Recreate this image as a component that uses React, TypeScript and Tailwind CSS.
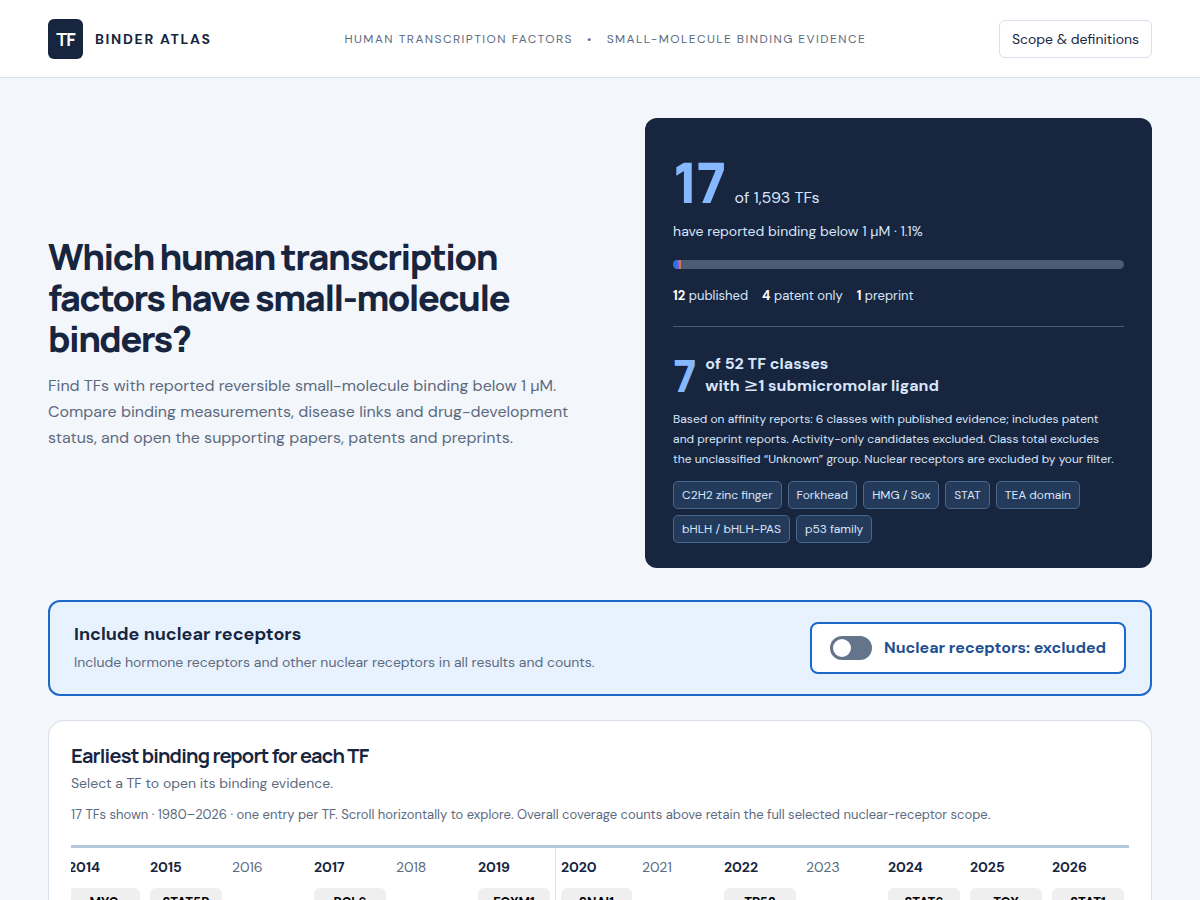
import { useState } from "react";

const tfClasses = [
  "C2H2 zinc finger",
  "Forkhead",
  "HMG / Sox",
  "STAT",
  "TEA domain",
  "bHLH / bHLH-PAS",
  "p53 family",
];

const evidence = [
  { label: "published", count: 12, color: "bg-[#2f6fe0]" },
  { label: "patent only", count: 4, color: "bg-[#7c5ce0]" },
  { label: "preprint", count: 1, color: "bg-[#d9734e]" },
];

const timeline = [
  { year: 2014, tf: "MYC" },
  { year: 2015, tf: "STAT5B" },
  { year: 2016 },
  { year: 2017, tf: "BCL6" },
  { year: 2018 },
  { year: 2019, tf: "FOXM1" },
  { year: 2020, tf: "SNAI1" },
  { year: 2021 },
  { year: 2022, tf: "TP53" },
  { year: 2023 },
  { year: 2024, tf: "STAT6" },
  { year: 2025, tf: "TOX" },
  { year: 2026, tf: "STAT1" },
];

const TOTAL_TFS = 1593;

function Header() {
  return (
    <header className="flex items-center justify-between border-b border-[#d6dfea] bg-white px-12 pt-[19px] pb-[18px]">
      <a href="#top" className="flex items-center gap-3">
        <span className="flex h-10 w-[35px] items-center justify-center rounded-md bg-[#17253f] font-['Manrope',Inter,sans-serif] text-lg font-bold tracking-tighter text-white">
          TF
        </span>
        <span className="text-sm font-bold tracking-[0.12em]">BINDER ATLAS</span>
      </a>
      <p className="flex gap-3.5 text-xs tracking-[0.12em] text-[#5c6a80]">
        <span>HUMAN TRANSCRIPTION FACTORS</span>
        <span>•</span>
        <span>SMALL-MOLECULE BINDING EVIDENCE</span>
      </p>
      <button className="rounded-md border border-[#d6dfea] bg-white px-3 py-2 text-sm">
        Scope &amp; definitions
      </button>
    </header>
  );
}

function CoverageCard() {
  return (
    <section className="rounded-xl bg-[#17253f] px-7 pt-9 pb-[25px] text-[#d8e6fb]">
      <div className="flex items-baseline gap-2.5">
        <strong className="font-['Manrope',Inter,sans-serif] text-[56px] leading-14 font-extrabold tracking-[-0.04em] text-[#86b8ff]">
          17
        </strong>
        <span className="text-base">of 1,593 TFs</span>
      </div>
      <p className="mt-[11px] text-sm leading-5">have reported binding below 1 µM · 1.1%</p>
      <div className="mt-[19px] flex h-[9px] overflow-hidden rounded-full bg-[#4d5c75]">
        {evidence.map((item) => (
          <span
            key={item.label}
            className={`min-w-[2px] ${item.color}`}
            style={{ width: `${(item.count / TOTAL_TFS) * 100}%` }}
          />
        ))}
      </div>
      <ul className="mt-[17px] flex gap-3.5 text-[13px] leading-5">
        {evidence.map((item) => (
          <li key={item.label}>
            <b className="text-white">{item.count}</b> {item.label}
          </li>
        ))}
      </ul>
      <div className="mt-5 flex items-center gap-2.5 border-t border-[#4d5c75] pt-[26px]">
        <strong className="font-['Manrope',Inter,sans-serif] text-[44px] leading-[44px] font-extrabold tracking-[-0.04em] text-[#86b8ff]">
          7
        </strong>
        <p className="text-base leading-[22px] font-bold">
          of 52 TF classes
          <br />
          with <span className="font-['DejaVu_Sans',sans-serif] text-lg leading-none font-normal">≥</span>1
          submicromolar ligand
        </p>
      </div>
      <p className="mt-3 pr-2 text-xs leading-5">
        Based on affinity reports: 6 classes with published evidence; includes patent and preprint reports.
        Activity-only candidates excluded. Class total excludes the unclassified “Unknown” group. Nuclear receptors
        are excluded by your filter.
      </p>
      <div className="mt-3 flex flex-wrap gap-1.5">
        {tfClasses.map((name) => (
          <button
            key={name}
            className="rounded-[5px] border border-[#4a678e] bg-[#243a5a] px-2 py-[5px] text-xs"
          >
            {name}
          </button>
        ))}
      </div>
    </section>
  );
}

function ReceptorFilter() {
  const [included, setIncluded] = useState(false);

  return (
    <section className="mt-8 flex items-center justify-between rounded-xl border-2 border-[#1b68c9] bg-[#e8f2fe] px-6 py-5">
      <div>
        <h2 className="text-lg leading-6 font-bold">Include nuclear receptors</h2>
        <p className="mt-1 text-sm leading-6 text-[#5c6a80]">
          Include hormone receptors and other nuclear receptors in all results and counts.
        </p>
      </div>
      <label className="flex items-center gap-3 rounded-lg border-2 border-[#1b68c9] bg-white px-[18px] py-3 text-base font-bold text-[#1d4f91]">
        <input
          type="checkbox"
          role="switch"
          checked={included}
          onChange={(e) => setIncluded(e.target.checked)}
          className="flex h-6 w-[42px] appearance-none items-center rounded-full bg-[#64748b] px-[3px] before:size-[18px] before:rounded-full before:bg-white checked:justify-end checked:bg-[#1b68c9]"
        />
        Nuclear receptors: {included ? "included" : "excluded"}
      </label>
    </section>
  );
}

function Timeline() {
  return (
    <section className="mt-6 rounded-2xl border border-[#d6dfea] bg-white px-[22px] pt-[23px] pb-6">
      <h2 className="font-['Manrope',Inter,sans-serif] text-xl leading-6 font-bold tracking-[-0.04em]">
        Earliest binding report for each TF
      </h2>
      <p className="mt-[5px] text-sm leading-5 text-[#5c6a80]">Select a TF to open its binding evidence.</p>
      <p className="mt-3 text-[13px] leading-5 text-[#5c6a80]">
        17 TFs shown · 1980–2026 · one entry per TF. Scroll horizontally to explore. Overall coverage counts above
        retain the full selected nuclear-receptor scope.
      </p>
      <div className="mt-5 flex justify-end overflow-hidden border-t-3 border-[#b3c8da]">
        {timeline.map(({ year, tf }) => (
          <div
            key={year}
            className={`w-[82px] shrink-0 px-[5px] pt-[7px] pb-6 ${year === 2020 ? "border-l border-[#d6dfea]" : ""}`}
          >
            <p className={`text-sm leading-6 ${tf ? "font-bold" : "text-[#5c6a80]"}`}>{year}</p>
            {tf && (
              <button className="mt-[9px] w-full rounded-md bg-[#efefef] py-[5px] text-[13px] leading-5 font-bold text-black">
                {tf}
              </button>
            )}
          </div>
        ))}
      </div>
    </section>
  );
}

export default function App() {
  return (
    <div id="top" className="min-h-screen bg-[#f3f6fb] font-['DM_Sans',Inter,sans-serif] text-[#17253f]">
      <Header />
      <main className="px-12 py-10">
        <div className="grid grid-cols-[13fr_12fr] items-center gap-12">
          <div>
            <h1 className="font-['Manrope',Inter,sans-serif] text-4xl leading-[41px] font-extrabold tracking-[-0.04em]">
              Which human transcription factors have small-molecule binders?
            </h1>
            <p className="mt-3.5 text-base leading-[26px] text-[#5c6a80]">
              Find TFs with reported reversible small-molecule binding below 1 µM. Compare binding measurements,
              disease links and drug-development status, and open the supporting papers, patents and preprints.
            </p>
          </div>
          <CoverageCard />
        </div>
        <ReceptorFilter />
        <Timeline />
      </main>
    </div>
  );
}
